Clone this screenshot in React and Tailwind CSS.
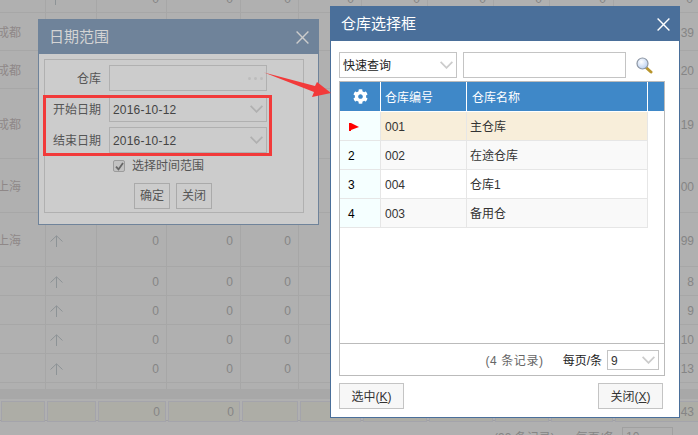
import React from 'react';
import { FaCog } from 'react-icons/fa';

const font = "font-['Liberation_Sans','Noto_Sans_CJK_SC',sans-serif]";
const cols = 'grid grid-cols-[46px_51px_70px_74px_58px_63px_66px_66px_56px_64px_87px]';

// background table behind the dialogs
const tableRows = [
  { h: 'h-[38px]', city: '成都', total: '39' },
  { h: 'h-[38px]', city: '成都', total: '20' },
  { h: 'h-[70px]', city: '成都', total: '19' },
  { h: 'h-[54px]', city: '上海', total: '00' },
  { h: 'h-[54px]', city: '上海', total: '99', arrow: true },
  { h: 'h-[29px]', city: '', total: '8', arrow: true },
  { h: 'h-[29px]', city: '', total: '9', arrow: true },
  { h: 'h-[29px]', city: '', total: '10', arrow: true },
  { h: 'h-[29px]', city: '', total: '13', arrow: true },
];

const UpArrow = () => (
  <svg width="13" height="12" viewBox="0 0 13 12" fill="none" stroke="#8d9396" strokeWidth="1">
    <path d="M0.5 6.5 L6.5 0.8 L12.5 6.5 M6.5 1 V12" />
  </svg>
);

const Chevron = ({ color }) => (
  <svg width="13" height="8" viewBox="0 0 13 8" fill="none" stroke={color} strokeWidth="1.8">
    <path d="M0.6 0.8 L6.5 6.8 L12.4 0.8" />
  </svg>
);

const Close = ({ color }) => (
  <svg width="13" height="13" viewBox="0 0 13 13" fill="none" stroke={color} strokeWidth="1.4" className="mt-px">
    <path d="M0.6 0.6 L12.4 12.4 M12.4 0.6 L0.6 12.4" />
  </svg>
);

const BackgroundCell = ({ children, className = '' }) => (
  <div className={`border-r border-[#a7a7a7] flex items-center justify-end pr-[7px] pt-[2px] ${className}`}>{children}</div>
);

const BackgroundTable = () => (
  <div className="w-[698px] h-[435px] overflow-hidden bg-[#b0b0b0] text-[12px] text-[#858585]">
    <div className={`${cols} h-[13px] border-b border-[#a7a7a7] overflow-hidden`}>
      <div className="border-r border-[#a7a7a7]" />
      <div className="border-r border-[#a7a7a7] pl-[8px]"><div className="w-px h-[5px] ml-[1px] bg-[#8d9396]" /></div>
      {[...Array(9)].map((_, i) => (
        <div key={i} className="border-r border-[#a7a7a7] pr-[7px] text-right">
          <div className="-mt-[3px] h-[4px] leading-[4px]">0</div>
        </div>
      ))}
    </div>
    {tableRows.map((row, i) => (
      <div key={i} className={`${cols} ${row.h} border-b border-[#a7a7a7]`}>
        <div className="border-r border-[#a7a7a7] flex items-center pt-[2px] -ml-[3px] text-[#8f8888]">{row.city}</div>
        <div className="border-r border-[#a7a7a7] flex items-center pl-[4px] pt-[2px]">{row.arrow && <UpArrow />}</div>
        {[...Array(8)].map((_, j) => <BackgroundCell key={j}>0</BackgroundCell>)}
        <BackgroundCell className="!border-r-0">{row.total}</BackgroundCell>
      </div>
    ))}
    <div className={`${cols} h-[6px]`}>
      {[...Array(11)].map((_, i) => <div key={i} className="border-r border-[#a7a7a7]" />)}
    </div>
    <div className="h-[10px] bg-[#a8a8a8]" />
    <div className={`${cols} h-[22px] pt-[2px] pb-[3px] border-b border-[#a0a0a0]`}>
      {['', '', '0', '0', '', '', '', '', '', '', '43'].map((value, i) => (
        <div key={i} className="mx-[1px] bg-[#adada6] border border-[#a4a4ab] flex items-center justify-end pr-[5px] pt-[1px]">{value}</div>
      ))}
    </div>
    <div className="flex justify-end items-start pt-[6px] pr-[25px]">
      <span className="mt-[2px] mr-[21px]">(99 条记录)</span>
      <span className="mt-[2px] mr-[7px]">每页/条</span>
      <div className="w-[51px] h-[20px] border border-[#a0a0a0] pl-[3px]">10</div>
    </div>
  </div>
);

const DateField = ({ label, value }) => (
  <div className="flex items-center">
    <span className="w-[56px] text-right pt-[2px]">{label}</span>
    <div className="ml-[8px] w-[158px] h-[26px] border border-[#b0b0b0] flex items-center justify-between pl-[3px] pr-[3px] text-[#444]">
      <span className="pt-[2px] tracking-[0.2px]">{value}</span>
      <Chevron color="#b0b0b0" />
    </div>
  </div>
);

const DateDialog = () => (
  <div className="absolute left-[38px] top-[19px] w-[281px] h-[206px] border border-t-0 border-[#6f839a] bg-[#cccccc] text-[12px] text-[#555]">
    <div className="h-[35px] -mx-px bg-[#6f839a] flex items-center justify-between pl-[11px] pr-[10px] text-[15px] text-[#d4d4d4]">
      <span className="pt-[2px]">日期范围</span>
      <Close color="#cccccc" />
    </div>
    <div className="mt-[5px] ml-[5px] w-[260px] h-[154px] border border-[#b0b0b0] pt-[5px] flex flex-col gap-[5px]">
      <div className="flex items-center">
        <span className="w-[56px] text-right pt-[2px]">仓库</span>
        <div className="ml-[8px] w-[158px] h-[26px] border border-[#b0b0b0] flex items-center justify-end pr-[3px] gap-[3px]">
          <i className="w-[3px] h-[3px] rounded-full bg-[#bcbcbc]" />
          <i className="w-[3px] h-[3px] rounded-full bg-[#bcbcbc]" />
          <i className="w-[3px] h-[3px] rounded-full bg-[#bcbcbc]" />
        </div>
      </div>
      <DateField label="开始日期" value="2016-10-12" />
      <DateField label="结束日期" value="2016-10-12" />
      <div className="flex items-center pl-[68px] h-[16px]">
        <span className="w-[12px] h-[12px] rounded-[2px] bg-[#c2c2c2] border border-[#9c9c9c] flex items-center justify-center">
          <svg width="9" height="9" viewBox="0 0 9 9" fill="none" stroke="#666" strokeWidth="1.8"><path d="M1 4.6 L3.5 7.4 L8 1" /></svg>
        </span>
        <span className="ml-[7px]">选择时间范围</span>
      </div>
      <div className="flex gap-[6px] pl-[89px] mt-[4px]">
        <div className="w-[36px] h-[26px] border border-[#aaaaaa] flex items-center justify-center">确定</div>
        <div className="w-[36px] h-[26px] border border-[#aaaaaa] flex items-center justify-center">关闭</div>
      </div>
    </div>
  </div>
);

const warehouses = [
  { no: '', code: '001', name: '主仓库', bg: 'bg-[#f8eeda]' },
  { no: '2', code: '002', name: '在途仓库', bg: 'bg-[#f9f9f9]' },
  { no: '3', code: '004', name: '仓库1', bg: 'bg-white' },
  { no: '4', code: '003', name: '备用仓', bg: 'bg-[#f9f9f9]' },
];

const SearchIcon = () => (
  <svg width="17" height="17" viewBox="0 0 17 17">
    <defs>
      <radialGradient id="lens" cx="0.4" cy="0.35" r="0.7">
        <stop offset="0" stopColor="#ffffff" />
        <stop offset="1" stopColor="#b6cdf0" />
      </radialGradient>
    </defs>
    <path d="M10 10.5 L15 15" stroke="#b8952c" strokeWidth="3" strokeLinecap="round" />
    <circle cx="6.5" cy="6.5" r="5.5" fill="url(#lens)" stroke="#8d96a3" strokeWidth="1.2" />
  </svg>
);

const WarehouseDialog = () => (
  <div className="absolute left-[330px] top-[6px] w-[350px] h-[412px] bg-white border border-t-0 border-[#4a6f9a] text-[12px] text-[#333]">
    <div className="h-[35px] -mx-px bg-[#4a6f9a] flex items-center justify-between pl-[11px] pr-[10px] text-[15px] text-white">
      <span className="pt-[2px]">仓库选择框</span>
      <Close color="#ffffff" />
    </div>
    <div className="pl-[8px] pt-[11px]">
      <div className="flex items-center h-[26px]">
        <div className="w-[118px] h-[26px] border border-[#c4c4c4] flex items-center justify-between pl-[3px] pr-[3px] text-[#222]">
          <span className="pt-[2px]">快速查询</span>
          <Chevron color="#cccccc" />
        </div>
        <div className="ml-[6px] w-[163px] h-[26px] border border-[#c4c4c4]" />
        <div className="ml-[10px]"><SearchIcon /></div>
      </div>
      <div className="mt-[3px] w-[326px] h-[295px] border border-[#bbbbbb] flex flex-col">
        <div className="grid grid-cols-[41px_86px_181px_16px] h-[30px] pb-px text-white">
          <div className="bg-[#3f88c8] border-r border-white flex items-center justify-center"><FaCog size={15} /></div>
          <div className="bg-[#3f88c8] border-r border-white flex items-center pl-[4px] pt-[2px]">仓库编号</div>
          <div className="bg-[#3f88c8] border-r border-white flex items-center pl-[5px] pt-[2px]">仓库名称</div>
          <div className="bg-[#3f88c8]" />
        </div>
        {warehouses.map((row) => (
          <div key={row.code} className={`grid grid-cols-[41px_86px_181px] w-[308px] h-[29px] border-b border-[#e6e6e6] ${row.bg}`}>
            <div className="bg-[#f5ffff] border-r border-[#e6e6e6] flex items-center pl-[8px] pt-[2px] text-black">
              {row.no || (
                <svg width="10" height="8" viewBox="0 0 10 8" className="ml-px"><path d="M0 0 H2 L10 4 L2 7 V8 H0 Z" fill="#ff0000" /></svg>
              )}
            </div>
            <div className="border-r border-[#e6e6e6] flex items-center pl-[4px] pt-[2px]">{row.code}</div>
            <div className="border-r border-[#e6e6e6] flex items-center pl-[3px] pt-[2px]">{row.name}</div>
          </div>
        ))}
        <div className="mt-auto h-[32px] border-t border-[#bbbbbb] flex items-center justify-end pr-[5px] pt-px">
          <span className="text-[#666] mr-[19px] tracking-[0.6px] pt-[2px]">(4 条记录)</span>
          <span className="text-[#222] mr-[5px] pt-[2px]">每页/条</span>
          <div className="w-[52px] h-[20px] border border-[#c4c4c4] flex items-center justify-between pl-[3px] pr-[3px]">
            <span className="pt-[1px]">9</span>
            <Chevron color="#cccccc" />
          </div>
        </div>
      </div>
      <div className="mt-[7px] w-[324px] flex justify-between">
        <div className="w-[65px] h-[26px] border border-[#c4c4c4] bg-[#f7f7f7] flex items-center justify-center pt-px">选中(<u>K</u>)</div>
        <div className="w-[65px] h-[26px] border border-[#c4c4c4] bg-[#f7f7f7] flex items-center justify-center pt-px">关闭(<u>X</u>)</div>
      </div>
    </div>
  </div>
);

export default function App() {
  return (
    <div className={`relative w-[698px] h-[435px] overflow-hidden ${font}`}>
      <BackgroundTable />
      <DateDialog />
      <WarehouseDialog />
      {/* red callout drawn over the screenshot */}
      <div className="absolute left-[43px] top-[95px] w-[229px] h-[61px] border-[3px] border-[#f23a3a]" />
      <svg className="absolute left-[260px] top-[68px]" width="75" height="34" viewBox="260 68 75 34">
        <path d="M264 72.5 L315 86 L317 82 L331 93 L312 97 L314 92 Z" fill="#f23a3a" />
      </svg>
    </div>
  );
}
